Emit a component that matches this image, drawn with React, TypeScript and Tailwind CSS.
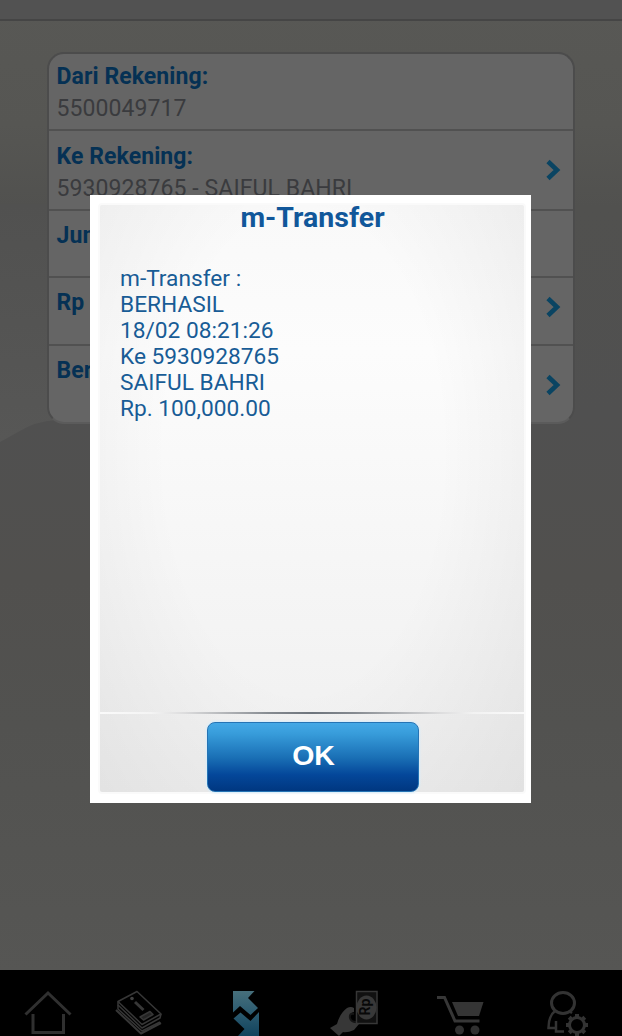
import React from "react";

type Row = { label: string; value?: string; arrow?: string; box: string };

const rows: Row[] = [
  { label: "Dari Rekening:", value: "5500049717", box: "h-[75px] pt-[7px]" },
  { label: "Ke Rekening:", value: "5930928765 - SAIFUL BAHRI", arrow: "pt-[18px]", box: "h-[80px] pt-[10px] border-t-2" },
  { label: "Jumlah:", box: "h-[67px] pt-[9px] border-t-2" },
  { label: "Rp", arrow: "pt-[9px]", box: "h-[68px] pt-[9px] border-t-2" },
  { label: "Berita:", arrow: "pt-[19px]", box: "h-[78px] pt-[9px] border-t-2" },
];

const message = [
  "m-Transfer :",
  "BERHASIL",
  "18/02 08:21:26",
  "Ke 5930928765",
  "SAIFUL BAHRI",
  "Rp. 100,000.00",
];

function Backdrop() {
  return (
    <svg className="absolute inset-0 h-full w-full" viewBox="0 0 622 1036" preserveAspectRatio="none" aria-hidden="true">
      <defs>
        <linearGradient id="sky" x1="0" y1="0" x2="0" y2="1">
          <stop offset="0" stopColor="#585855" />
          <stop offset=".12" stopColor="#565653" />
          <stop offset=".2" stopColor="#51514f" />
          <stop offset=".4" stopColor="#505050" />
          <stop offset=".56" stopColor="#51504e" />
          <stop offset=".7" stopColor="#525250" />
          <stop offset=".94" stopColor="#565654" />
        </linearGradient>
        <linearGradient id="hill" x1="0" y1="0" x2="0" y2="1">
          <stop offset="0" stopColor="#515150" />
          <stop offset="1" stopColor="#575756" />
        </linearGradient>
      </defs>
      <rect width="622" height="1036" fill="url(#sky)" />
      <path d="M0 204H48L110 260V420H56Q36 421 18 432L0 442Z" fill="url(#hill)" />
    </svg>
  );
}

function Arrow() {
  return (
    <svg className="h-[22px] w-[16px]" viewBox="0 0 16 22" fill="none" aria-hidden="true">
      <path d="M3 2.5L12 11L3 19.5" stroke="#0a4462" strokeWidth="4.6" />
    </svg>
  );
}

function HomeIcon() {
  return (
    <svg className="h-[46px] w-[48px]" viewBox="0 0 48 46" fill="none" stroke="#303030" strokeWidth="3" aria-hidden="true">
      <path d="M1.5 24.5L24 3L46.5 24.5" />
      <path d="M9 24V42.5H39.5V24" />
    </svg>
  );
}

function StatementIcon() {
  return (
    <svg className="h-[46px] w-[48px]" viewBox="0 0 48 46" fill="none" stroke="#373737" strokeWidth="1.5" strokeLinejoin="round" aria-hidden="true">
      <path d="M3 11.500L22 1.500L46 24L27 34.500Z" />
      <path d="M3 11.500V15L27 38L45 28L46 24" />
      <path d="M3 15V19L27 41L45 32" />
      <path d="M1 20L26 43.500L46 33" strokeWidth="2" />
      <path d="M20 12L28.500 20" strokeWidth="3" />
      <path d="M25 27L35 21.500L38 24.500L28.500 30Z" fill="#242424" />
      <circle cx="17" cy="8.500" r="1.800" fill="#404040" stroke="none" />
    </svg>
  );
}

function TransferIcon() {
  return (
    <svg className="h-[46px] w-[28px]" viewBox="0 0 28 46" aria-hidden="true">
      <defs>
        <linearGradient id="arrows" x1="0" y1="0" x2="0" y2="46" gradientUnits="userSpaceOnUse">
          <stop offset="0" stopColor="#48707c" />
          <stop offset=".5" stopColor="#2b5b70" />
          <stop offset="1" stopColor="#12435d" />
        </linearGradient>
      </defs>
      <path d="M1 1H22.500L16 8L26 18L18.500 25L8 16L1 22.500Z" fill="url(#arrows)" />
      <path d="M27 22V46H6L12.500 39L1.500 28.500L8.500 22.500L18.500 31Z" fill="url(#arrows)" />
    </svg>
  );
}

function CashIcon() {
  return (
    <svg className="h-[46px] w-[54px]" viewBox="0 0 54 46" aria-hidden="true">
      <path d="M1 38L8 34Q11 23 18 18Q22 16 25 18V22Q20 23 21 28Q22 32 30 34L25 40Q18 43 14 42L10 46Z" fill="#373737" />
      <path d="M25 24Q20 23 21 28Q22 32 27 32" fill="none" stroke="#151515" strokeWidth="2" />
      <rect x="27.500" y="1.500" width="20.500" height="32" fill="#111" stroke="#373737" strokeWidth="1.500" />
      <ellipse cx="37.500" cy="17.500" rx="10" ry="12" fill="#383838" />
      <text x="0" y="0" transform="translate(41 25.500) rotate(-90)" className="font-['Roboto'] text-[14px] font-bold" fill="#080808">Rp</text>
    </svg>
  );
}

function CartIcon() {
  return (
    <svg className="h-[46px] w-[48px]" viewBox="0 0 48 46" fill="none" aria-hidden="true">
      <path d="M1 7.500H8.500L19 31H43.500" stroke="#373737" strokeWidth="3" />
      <path d="M16 12H47.500L43 26H22Z" fill="#353535" />
      <circle cx="23.500" cy="40" r="4.500" fill="#303030" />
      <circle cx="39" cy="40" r="4.500" fill="#303030" />
    </svg>
  );
}

function ProfileIcon() {
  const teeth = [0, 45, 90, 135, 180, 225, 270, 315];
  return (
    <svg className="h-[46px] w-[44px]" viewBox="0 0 44 46" fill="none" stroke="#333" strokeWidth="3" aria-hidden="true">
      <ellipse cx="17" cy="13" rx="11.500" ry="10.500" />
      <path d="M9 21Q2.500 26 2.500 38H10V31M10 38V41.500H18M23 21L26 23" strokeWidth="2.500" />
      <circle cx="31" cy="35" r="7.500" />
      {teeth.map((angle) => (
        <path key={angle} d="M31 27V24" transform={`rotate(${angle} 31 35)`} strokeWidth="4" />
      ))}
    </svg>
  );
}

const tabs = [
  { name: "home", box: "w-[96px]", Icon: HomeIcon },
  { name: "info", box: "w-[86px]", Icon: StatementIcon },
  { name: "transfer", box: "w-[128px]", Icon: TransferIcon },
  { name: "payment", box: "w-[92px]", Icon: CashIcon },
  { name: "commerce", box: "w-[116px]", Icon: CartIcon },
  { name: "admin", box: "w-[100px]", Icon: ProfileIcon },
];

export default function App() {
  return (
    <div className="relative h-[1036px] w-[622px] overflow-hidden font-['Roboto',sans-serif]">
      <Backdrop />
      <div className="relative flex h-full flex-col">
        <header className="h-[21px] shrink-0 border-b-2 border-[#454545] bg-[#525252]" />
        <main className="flex-1 px-[47px] pt-[31px]">
          <div className="w-[528px] overflow-hidden rounded-[17px] border-2 border-[#4c4c4c] border-b-[#5b5b5b] bg-[#656565]">
            {rows.map((row) => (
              <div key={row.label} className={`flex justify-between border-[#515151] pr-[12px] pl-[7.5px] ${row.box}`}>
                <div className="whitespace-nowrap text-[23px] leading-[32px]">
                  <div className="font-bold tracking-[0.08px] text-[#053154]">{row.label}</div>
                  {row.value && <div className="tracking-[0.08px] text-[#3a3b3e]">{row.value}</div>}
                </div>
                {row.arrow && (
                  <div className={row.arrow}>
                    <Arrow />
                  </div>
                )}
              </div>
            ))}
          </div>
        </main>
        <nav className="flex h-[66px] shrink-0 bg-black pt-[20px]">
          {tabs.map(({ name, box, Icon }) => (
            <div key={name} className={`flex shrink-0 justify-center ${box}`}>
              <Icon />
            </div>
          ))}
        </nav>
      </div>

      <section className="absolute top-[195px] left-[90px] flex h-[608px] w-[441px] flex-col bg-white pt-[8px] pr-[5px] pb-[10px] pl-[8px]">
        <div className="flex flex-1 flex-col rounded-[4px] border-2 border-[#fafafa] bg-[radial-gradient(ellipse_72%_90%_at_48%_42%,rgba(0,0,0,0)_0%,rgba(0,0,0,0)_45%,rgba(0,0,0,0.04)_80%,rgba(0,0,0,0.06)_100%),linear-gradient(#f9f9f9_0%,#fcfcfc_25%,#f6f6f6_60%,#efefef_100%)]">
          <h1 className="h-[61px] pl-[1px] text-center text-[28.500px] leading-[26px] font-bold text-[#11579a]">m-Transfer</h1>
          <div className="h-[446px] pl-[20px] text-[22.700px] leading-[26px] text-[#185c96]">
            {message.map((line) => (
              <p key={line}>{line}</p>
            ))}
          </div>
          <div className="h-[2px] bg-[linear-gradient(90deg,#fafafa_0%,#f4f4f4_12%,#dcdcdd_20%,#858a90_40%,#6d747c_50%,#858a90_60%,#dcdcdd_80%,#f2f2f2_88%,#fafafa_100%)]" />
          <div className="flex justify-center pt-[8px] pl-[1px]">
            <button className="flex h-[70px] w-[212px] justify-center rounded-[8px] border border-[#2574b5] bg-[linear-gradient(#43a8e6_0%,#389ddb_15%,#196eb4_52%,#04479a_76%,#003780_100%)] pl-[2px] font-['Liberation_Sans',sans-serif] text-[28.500px] leading-[64px] font-bold text-white shadow-[0_0_2px_1px_#d5edfb]">
              OK
            </button>
          </div>
        </div>
      </section>
    </div>
  );
}
